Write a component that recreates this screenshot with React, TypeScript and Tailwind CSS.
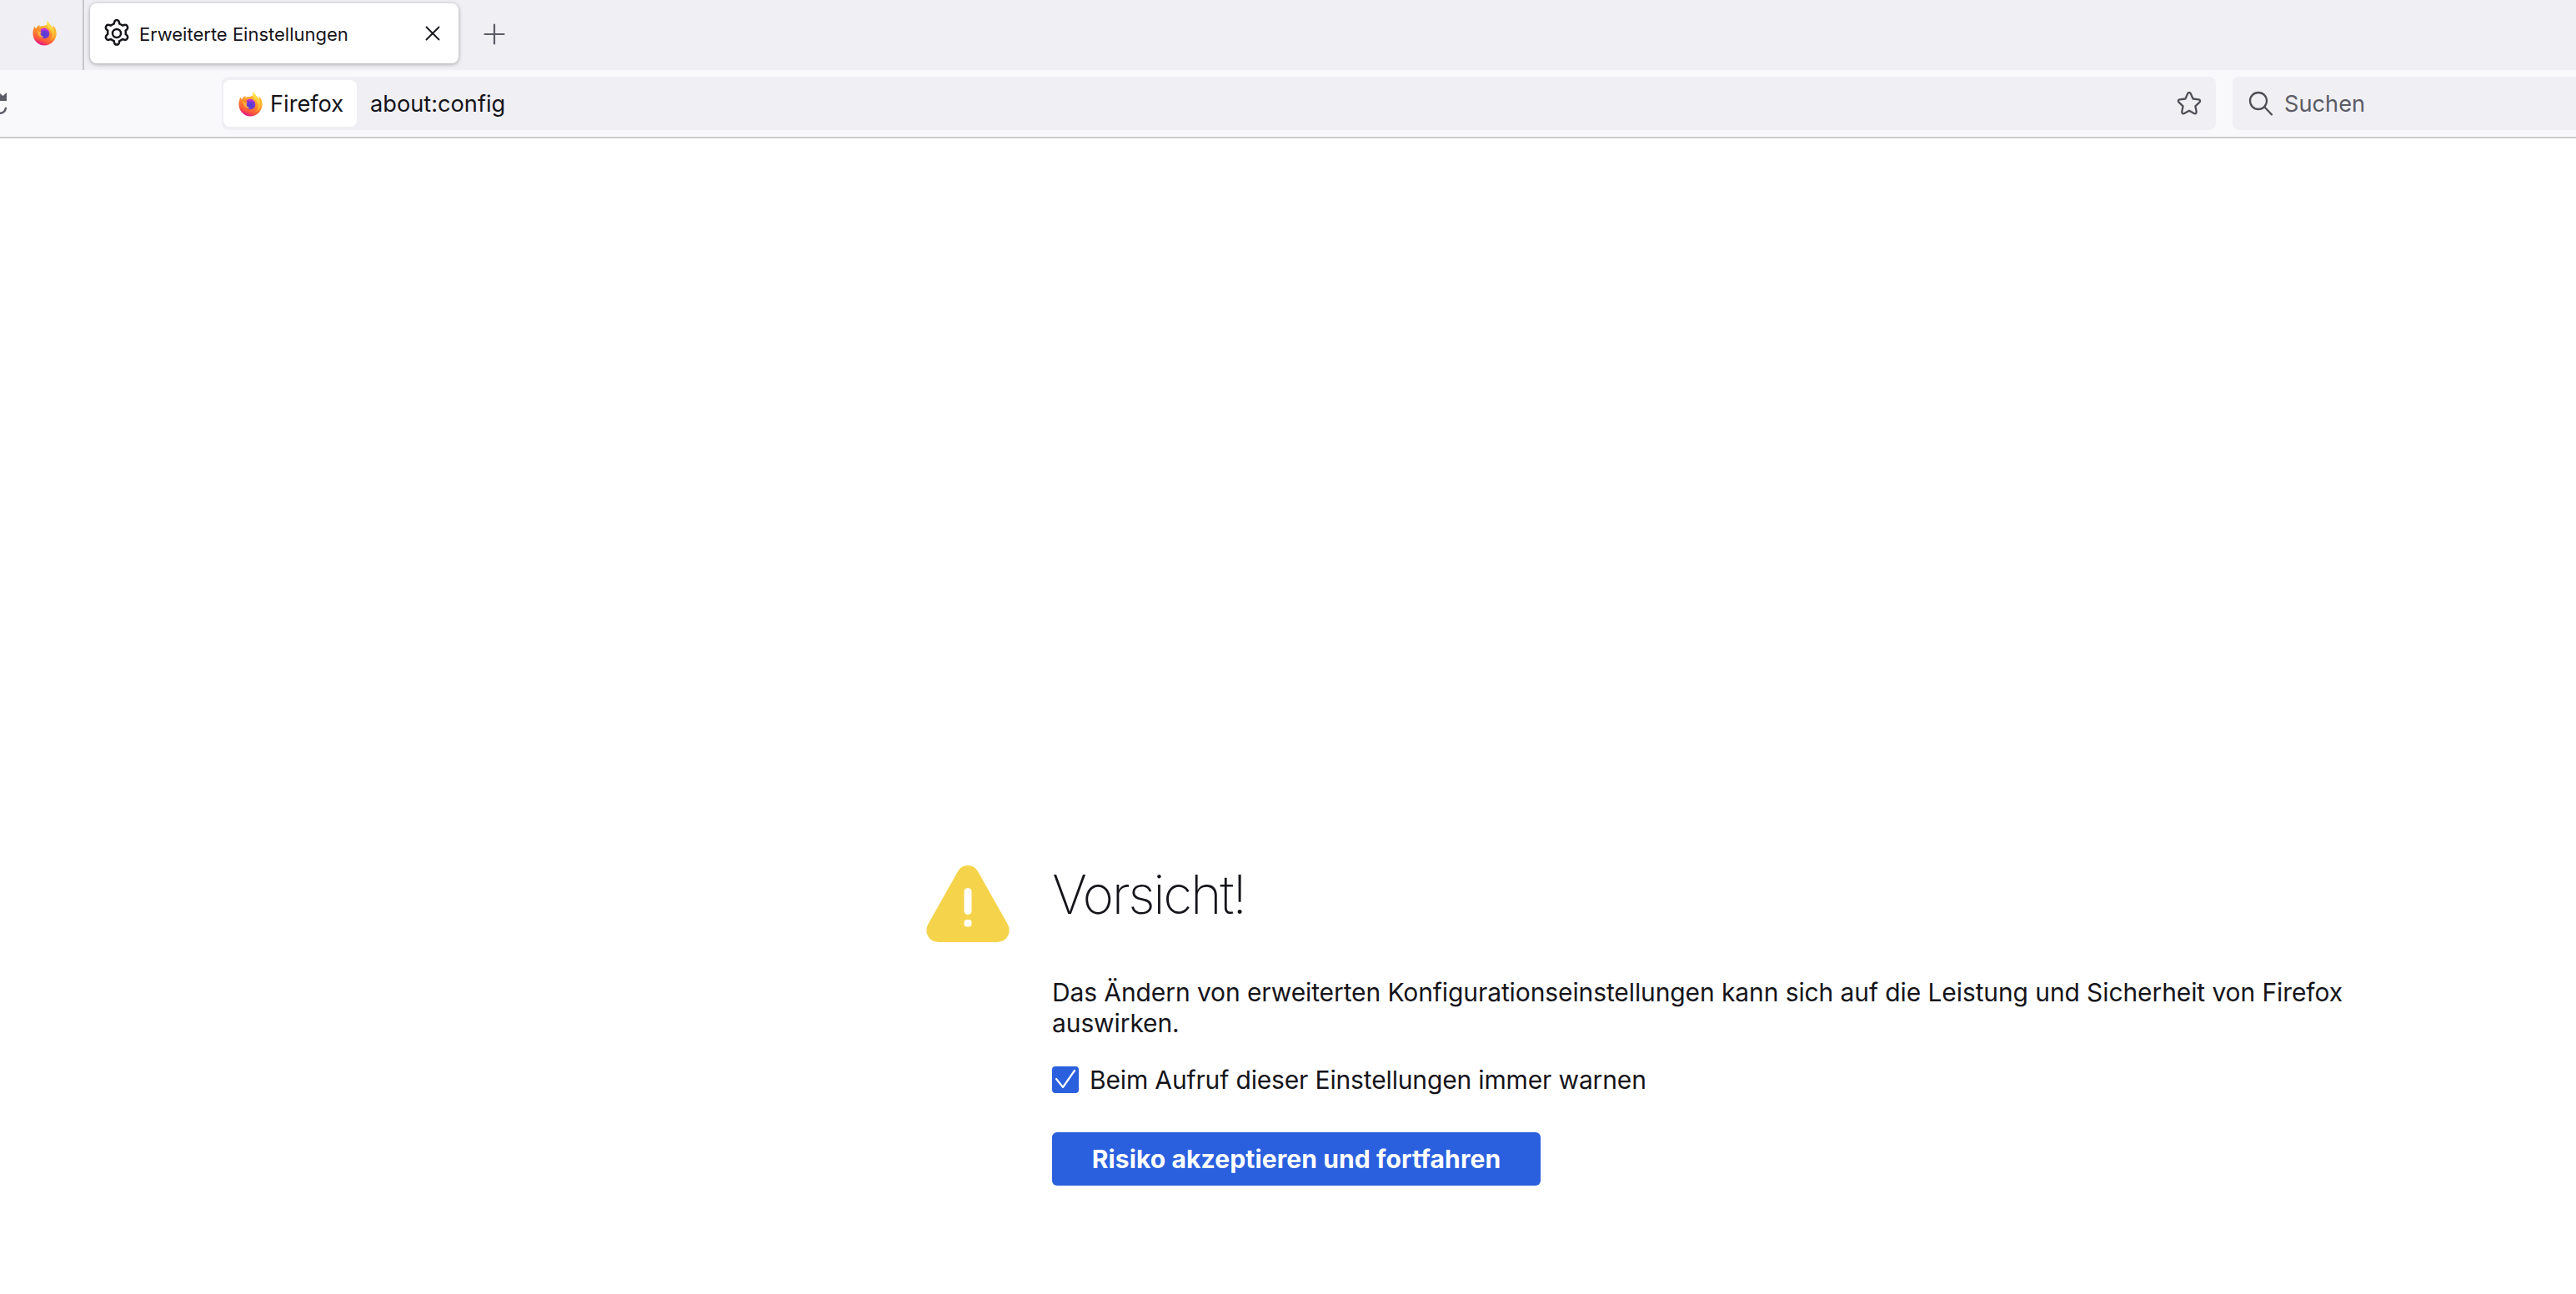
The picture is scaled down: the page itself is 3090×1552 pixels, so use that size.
import React from "react";

const font = { fontFamily: '"Inter", "Liberation Sans", sans-serif' };

function FirefoxLogo({ id, className }: { id: string; className: string }) {
  return (
    <svg viewBox="0 0 32 32" className={className}>
      <defs>
        <linearGradient id={`${id}a`} x1="0.85" y1="0.1" x2="0.4" y2="1">
          <stop offset="0" stopColor="#ffc93a" />
          <stop offset="0.45" stopColor="#ff8a2c" />
          <stop offset="0.78" stopColor="#ff5a3a" />
          <stop offset="1" stopColor="#e31587" />
        </linearGradient>
        <linearGradient id={`${id}b`} x1="0.5" y1="0" x2="0.6" y2="1">
          <stop offset="0" stopColor="#ffe94f" />
          <stop offset="1" stopColor="#ffb32c" />
        </linearGradient>
        <radialGradient id={`${id}c`} cx="0.5" cy="0.6" r="0.6">
          <stop offset="0" stopColor="#4b3fd6" />
          <stop offset="1" stopColor="#8a35d0" />
        </radialGradient>
      </defs>
      <path
        d="M16 31.500C8 31.500 1.500 25 1.500 16.500c0-3.500.8-6.500 2.500-8.800.2 1.600.7 2.500 1.400 3C6 8.300 8 6.500 10.500 6.400c-.6.700-1 1.400-1 2.100 1.500-1 3.500-1.400 5.500-1.200L21 5l9.500 11.500c0 8-6.500 15-14.500 15Z"
        fill={`url(#${id}a)`}
      />
      <path
        d="M20 0c.2 3.200 2.200 5 4.200 7 3 2.900 4.800 6.300 4.300 10.500-.4 3.400-2.200 6.200-5.500 8 2.700-3.200 3.300-7 1.800-10.500-1.200-2.900-3.300-4.400-5-6.200C18.300 6 18.300 3 20 0Z"
        fill={`url(#${id}b)`}
      />
      <path
        d="M26 6.500c3 2.500 4.500 5.600 4.500 9.700 0 2.800-.7 5.400-2.300 7.500 1-3.300.9-6.400-.1-9.400-.7-2.500-1.300-5-2.100-7.800Z"
        fill="#ffb52e"
      />
      <circle cx="16" cy="17" r="6" fill={`url(#${id}c)`} />
      <path
        d="M10.500 12.500c1.700-2 3.800-2.800 5.800-2.400 2.700.4 4.900 2.400 5.500 5.200-1.500-1.900-3.600-2.800-5.900-2.600-2 .1-3.800.5-5.400-.2Z"
        fill="#c231d6"
      />
      <path
        d="M5 14c2.500-.4 5 0 7.100.7-1.300 1.300-1.500 2.900-.5 4.200.9 1.200 2.300 1.900 3.900 2-2.200.8-4.600.4-6.300-1-1.300-1.100-1.700-2.500-1.500-3.800-.8-.8-1.700-1.400-2.700-2.100Z"
        fill="#ffb03a"
      />
    </svg>
  );
}

export default function App() {
  return (
    <div className="min-h-screen bg-white text-[#15141a] overflow-hidden" style={font}>
      <header className="h-[84px] bg-[#f0f0f4] flex items-start">
        <div className="w-[99px] h-full flex items-center justify-end pr-[30px] pb-[5px]">
          <FirefoxLogo id="t" className="w-[31px] h-[31px]" />
        </div>
        <div className="w-[2px] h-full bg-[#c8c8cc]" />
        <div className="ml-[7px] mt-[4px] w-[442px] h-[72px] bg-white rounded-[8px] shadow-[0_1px_5px_rgba(0,0,0,0.35)] flex items-center pl-[17px] pr-[22px]">
          <svg viewBox="2.400 1.200 19.200 21.600" className="w-[30px] h-[34px] shrink-0" fill="none" stroke="#15141a" strokeWidth="1.600" strokeLinejoin="round">
            <path d="M12 1.800c1 0 1.700.7 1.900 1.700l.2 1.200c.9.300 1.700.7 2.400 1.300l1.200-.4c1-.3 2 .1 2.400.9.500.9.300 1.900-.4 2.600l-.9.800c.2.900.2 1.800 0 2.700l.9.800c.7.700.9 1.700.4 2.600-.4.800-1.400 1.200-2.400.9l-1.200-.4c-.7.600-1.500 1-2.400 1.300l-.2 1.200c-.2 1-.9 1.700-1.900 1.700s-1.700-.7-1.900-1.700l-.2-1.200c-.9-.3-1.700-.7-2.400-1.300l-1.200.4c-1 .3-2-.1-2.400-.9-.5-.9-.3-1.900.4-2.600l.9-.8c-.2-.9-.2-1.800 0-2.700l-.9-.8c-.7-.7-.9-1.700-.4-2.600.4-.8 1.400-1.200 2.400-.9l1.200.4c.7-.6 1.500-1 2.400-1.300l.2-1.200c.2-1 .9-1.700 1.900-1.700Z" />
            <circle cx="12" cy="12" r="3.200" />
          </svg>
          <span className="ml-[12px] mt-[2px] text-[22px] leading-none flex-1 whitespace-nowrap">Erweiterte Einstellungen</span>
          <svg viewBox="0 0 18 18" className="w-[18px] h-[18px]" stroke="#15141a" strokeWidth="1.800" strokeLinecap="round">
            <path d="M1.500 1.500l15 15M16.500 1.500l-15 15" />
          </svg>
        </div>
        <div className="ml-[30px] mt-[28px]">
          <svg viewBox="0 0 26 26" className="w-[26px] h-[26px]" stroke="#5b5b66" strokeWidth="2.200" strokeLinecap="round">
            <path d="M13 1.500v23M1.500 13h23" />
          </svg>
        </div>
      </header>

      <nav className="h-[82px] bg-[#f9f9fb] border-b-2 border-[#cccccc] flex items-start pt-[8px]">
        <div className="w-[266px] h-[64px] flex items-center shrink-0">
          <svg viewBox="0 0 8 26" className="w-[8px] h-[26px]" fill="none">
            <path d="M0 24.800c3.800 0 6.800-3 7-7" stroke="#5b5b66" strokeWidth="2.400" />
            <path d="M0 1L3.500 4 8 0v10H0Z" fill="#5b5b66" />
          </svg>
        </div>
        <div className="w-[2392px] h-[64px] bg-[#f0f0f4] rounded-[8px] flex items-center pl-[2px] pr-[16px] shrink-0">
          <div className="h-[56px] w-[160px] bg-white rounded-[8px] flex items-center pl-[17px]">
            <FirefoxLogo id="u" className="w-[31px] h-[31px]" />
            <span className="ml-[8px] mt-[2px] text-[27.200px] leading-none text-[#15141a]">Firefox</span>
          </div>
          <span className="ml-[16px] mt-[2px] text-[27.200px] leading-none flex-1">about:config</span>
          <svg viewBox="0 0 32 30" className="w-[32px] h-[30px]" fill="none" stroke="#4f4f58" strokeWidth="2.300" strokeLinejoin="round">
            <path d="M16 2c.8 0 1.400.5 1.800 1.300l2.800 6.200 6.800.9c1.700.2 2.300 2 1 3.200l-5 4.700 1.300 6.700c.3 1.700-1.300 2.900-2.800 2.100L16 23.700l-5.900 3.400c-1.500.8-3.100-.4-2.800-2.100l1.300-6.700-5-4.700c-1.300-1.200-.7-3 1-3.200l6.800-.9 2.800-6.200C14.600 2.500 15.200 2 16 2Z" />
          </svg>
        </div>
        <div className="ml-[20px] h-[64px] flex-1 bg-[#f0f0f4] rounded-l-[8px] flex items-center pl-[19px] text-[#5b5b66]">
          <svg viewBox="0 0 30 30" className="w-[30px] h-[30px]" fill="none" stroke="#4f4f58" strokeWidth="2.300" strokeLinecap="round">
            <circle cx="12" cy="12" r="10" />
            <path d="M19.500 19.500l8.500 9" />
          </svg>
          <span className="ml-[13px] mt-[2px] text-[27.200px] leading-none">Suchen</span>
        </div>
      </nav>

      <main className="pl-[1111px] pt-[872px] flex">
        <svg viewBox="0 0 100 92" className="w-[100px] h-[92px] shrink-0">
          <path d="M50 0c6 0 9.800 3.200 12.500 8l35 62c5.700 10-.5 22-12.500 22H15C3 92-3.200 80 2.500 70l35-62C40.200 3.200 44 0 50 0Z" fill="#f5d44b" />
          <rect x="45.500" y="27" width="9" height="32" rx="4.500" fill="#fff" />
          <rect x="45.500" y="65" width="9" height="8.500" rx="3.500" fill="#fff" />
        </svg>
        <div className="ml-[51px] w-[1600px]">
          <h1 className="text-[64px] leading-[78px] font-extralight tracking-[-2.300px] -mt-[4px]">Vorsicht!</h1>
          <p className="mt-[60px] text-[30px] leading-[37px] tracking-[-0.100px] w-[1560px]">
            Das Ändern von erweiterten Konfigurationseinstellungen kann sich auf die Leistung und Sicherheit von Firefox auswirken.
          </p>
          <label className="mt-[33px] flex items-center h-[32px]">
            <span className="w-[32px] h-[32px] bg-[#2a60de] rounded-[4px] flex items-center justify-center">
              <svg viewBox="0 0 32 32" className="w-[32px] h-[32px]" fill="none" stroke="#fff" strokeWidth="2.200" strokeLinecap="round" strokeLinejoin="round">
                <path d="M5 15l8 10L27 5" />
              </svg>
            </span>
            <span className="ml-[13px] text-[30px] leading-none tracking-[-0.150px]">Beim Aufruf dieser Einstellungen immer warnen</span>
          </label>
          <button className="mt-[47px] w-[586px] h-[64px] bg-[#2a60de] rounded-[6px] text-white text-[30px] font-bold leading-none tracking-[0.120px] block text-center">
            Risiko akzeptieren und fortfahren
          </button>
        </div>
      </main>
    </div>
  );
}
